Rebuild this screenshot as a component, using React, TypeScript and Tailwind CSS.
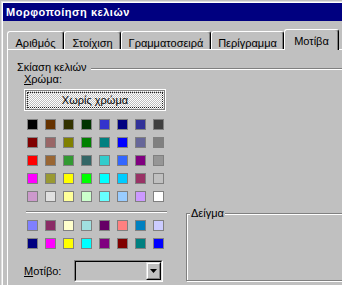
import React from "react";

const row1 = [
  ["bg-[#000000]", "bg-[#663300]", "bg-[#333300]", "bg-[#003300]", "bg-[#3333cc]", "bg-[#000080]", "bg-[#333399]", "bg-[#404040]"],
  ["bg-[#800000]", "bg-[#996666]", "bg-[#808000]", "bg-[#008000]", "bg-[#008080]", "bg-[#0000ff]", "bg-[#666699]", "bg-[#808080]"],
  ["bg-[#ff0000]", "bg-[#996633]", "bg-[#339933]", "bg-[#336666]", "bg-[#33cccc]", "bg-[#3366ff]", "bg-[#800080]", "bg-[#969696]"],
  ["bg-[#ff00ff]", "bg-[#999933]", "bg-[#ffff00]", "bg-[#00ff00]", "bg-[#00ffff]", "bg-[#00ccff]", "bg-[#993366]", "bg-[#c0c0c0]"],
  ["bg-[#cc99cc]", "bg-[#e0e0e0]", "bg-[#ffff99]", "bg-[#ccffcc]", "bg-[#66ffff]", "bg-[#99ccff]", "bg-[#cc99ff]", "bg-[#ffffff]"],
];
const row2 = [
  ["bg-[#7f7fff]", "bg-[#8b2c66]", "bg-[#ffffcc]", "bg-[#a0e0e0]", "bg-[#660066]", "bg-[#ff8080]", "bg-[#0080c0]", "bg-[#ccccff]"],
  ["bg-[#000080]", "bg-[#ff00ff]", "bg-[#ffff00]", "bg-[#00ffff]", "bg-[#800080]", "bg-[#800000]", "bg-[#008080]", "bg-[#0000ff]"],
];

function Grid({ rows }: { rows: string[][] }) {
  return (
    <div className="grid grid-cols-[repeat(8,11px)] gap-[7px] pl-[3px]">
      {rows.flat().map((c, i) => (
        <div key={i} className={`w-[11px] h-[11px] border border-[#808080] ${c}`} />
      ))}
    </div>
  );
}

function Tab({ label, w }: { label: string; w: string }) {
  return (
    <div
      className={`${w} h-[18px] shrink-0 border-l border-t border-r border-white border-r-black shadow-[inset_-1px_0_0_#808080] rounded-t-[3px] pt-[5px] text-center leading-[12px] whitespace-nowrap overflow-hidden`}
    >
      {label}
    </div>
  );
}

export default function App() {
  return (
    <div className="w-[342px] h-[285px] overflow-hidden bg-[#c0c0c0] font-['Liberation_Sans',Arial,sans-serif] text-[11px] text-black">
      <div className="w-[460px] h-[300px] pl-px pt-px">
        <div className="h-full border-l border-t border-[#dfdfdf]">
          <div className="h-full border-l border-t border-white">
            {/* title bar */}
            <div className="h-[18px] bg-[#000080] text-white font-bold text-[11px] tracking-[0.5px] leading-[17px] pt-px pl-[3px] whitespace-nowrap">
              Μορφοποίηση κελιών
            </div>

            {/* tabs */}
            <div className="mt-[8px] ml-[4px] flex items-end">
              <Tab label="Αριθμός" w="w-[57px]" />
              <Tab label="Στοίχιση" w="w-[57px]" />
              <Tab label="Γραμματοσειρά" w="w-[90px]" />
              <Tab label="Περίγραμμα" w="w-[73px]" />
              <div className="relative z-10 -mb-px w-[55px] h-[21px] shrink-0 bg-[#c0c0c0] border-l border-t border-r border-white border-r-black shadow-[inset_-1px_0_0_#808080] rounded-t-[3px] pt-[5px] text-center leading-[12px]">
                Μοτίβα
              </div>
            </div>

            {/* panel */}
            <div className="ml-[4px] w-[440px] h-[260px] border-l border-t border-white">
              {/* header */}
              <div className="mt-[11px] ml-[9px] flex items-start gap-[4px]">
                <span className="leading-[12px] whitespace-nowrap">Σκίαση κελιών</span>
                <div className="flex-1 mt-[7px] h-[2px] border-t border-[#808080] border-b border-b-white" />
              </div>

              <div className="flex">
                {/* left column */}
                <div className="ml-[16px] w-[143px] shrink-0 flex flex-col">
                  <div className="leading-[12px]">
                    <span className="underline">Χ</span>ρώμα:
                  </div>
                  <div className="mt-[4px] w-[142px] h-[22px] border border-white">
                    <div className="h-full border border-[#808080] p-px bg-[repeating-conic-gradient(#ffffff_0_25%,#c0c0c0_0_50%)] bg-[length:2px_2px]">
                      <div className="h-full border border-dotted border-[#202020] flex items-center justify-center leading-[12px]">
                        Χωρίς χρώμα
                      </div>
                    </div>
                  </div>
                  <div className="mt-[8px]">
                    <Grid rows={row1} />
                  </div>
                  <div className="mt-[9px] ml-[2px] w-[141px] h-[2px] border-t border-[#808080] border-b border-b-white" />
                  <div className="mt-[7px]">
                    <Grid rows={row2} />
                  </div>
                  <div className="mt-[11px] flex items-center">
                    <div className="w-[50px] leading-[12px]">
                      <span className="underline">Μ</span>οτίβο:
                    </div>
                    <div className="w-[89px] h-[22px] border border-t-[#808080] border-l-[#808080] border-b-white border-r-white">
                      <div className="h-full border border-t-black border-l-black border-b-[#dfdfdf] border-r-[#dfdfdf] flex justify-end">
                        <div className="w-[15px] h-full border border-t-[#dfdfdf] border-l-[#dfdfdf] border-b-black border-r-black">
                          <div className="h-full border border-t-white border-l-white border-b-[#808080] border-r-[#808080] flex items-center justify-center">
                            <svg width="7" height="4" viewBox="0 0 7 4">
                              <path d="M0 0H7L3.5 4Z" fill="#000" />
                            </svg>
                          </div>
                        </div>
                      </div>
                    </div>
                  </div>
                </div>

                {/* right column */}
                <div className="ml-[19px] mt-[134px] flex-1">
                  <fieldset className="h-[74px] border border-[#808080] shadow-[inset_1px_1px_0_#ffffff,1px_1px_0_#ffffff]">
                    <legend className="ml-[3px] px-px leading-[12px] bg-[#c0c0c0]">Δείγμα</legend>
                  </fieldset>
                </div>
              </div>
            </div>
          </div>
        </div>
      </div>
    </div>
  );
}
